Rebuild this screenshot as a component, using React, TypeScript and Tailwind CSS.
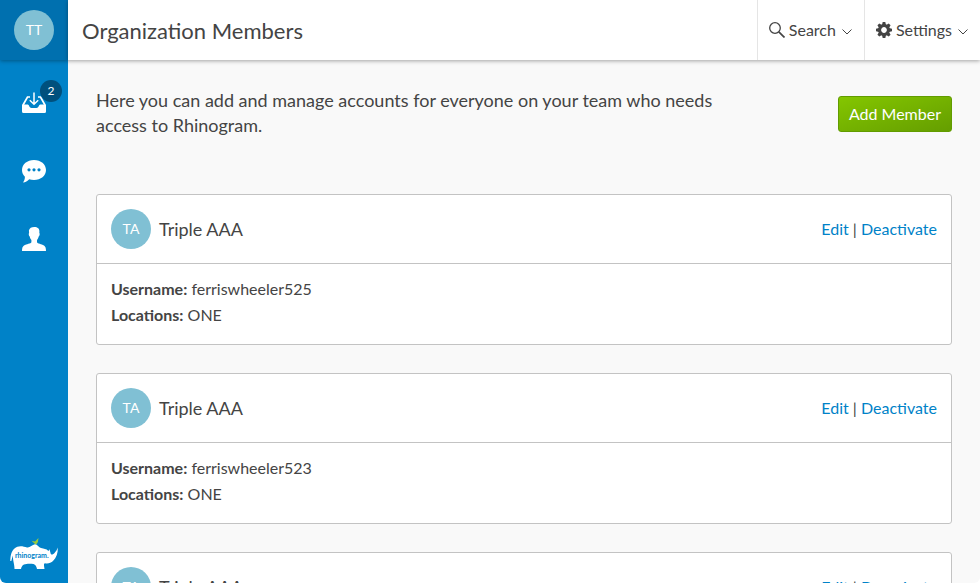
import type { ReactNode } from "react";

type Member = { id: number; initials: string; name: string; username: string; locations: string };

const members: Member[] = [
  { id: 1, initials: "TA", name: "Triple AAA", username: "ferriswheeler525", locations: "ONE" },
  { id: 2, initials: "TA", name: "Triple AAA", username: "ferriswheeler523", locations: "ONE" },
  { id: 3, initials: "TA", name: "Triple AAA", username: "ferriswheeler522", locations: "ONE" },
];

function Avatar({ initials }: { initials: string }) {
  return (
    <span className="flex size-10 shrink-0 items-center justify-center rounded-full bg-[#80c0d4] text-sm text-white">
      {initials}
    </span>
  );
}

function InboxIcon() {
  return (
    <svg viewBox="0 0 24 22" className="h-[22px] w-6" fill="none" aria-hidden="true">
      <path
        d="M0 12.500V19.500Q0 21 1.500 21H22.500Q24 21 24 19.500V12.500H18.200C17 12.500 16.600 16 14.500 16H9.500C7.400 16 7 12.500 5.800 12.500Z"
        fill="#fff"
      />
      <path d="M1 13L5.500 5H8M23 13L18.500 5H16" stroke="#fff" strokeWidth="1.700" />
      <path d="M12 .5V12M7.800 8.300L12 12.300L16.200 8.300" stroke="#fff" strokeWidth="1.500" />
    </svg>
  );
}

function ChatIcon() {
  return (
    <svg viewBox="0 0 24 23" className="h-[23px] w-6" aria-hidden="true">
      <path
        d="M12 0C18.800 0 24 4.200 24 10S18.800 20 12 20C10.200 20 8.600 19.800 7.200 19.300C5.500 21.200 3.500 22.300 1 22.500C2.200 21 2.900 19.200 2.900 16.800C1.100 15 0 12.800 0 10C0 4.200 5.200 0 12 0Z"
        fill="#fff"
      />
      <g fill="#0082c8">
        <circle cx="7" cy="9.800" r="1.600" />
        <circle cx="12" cy="9.800" r="1.600" />
        <circle cx="17" cy="9.800" r="1.600" />
      </g>
    </svg>
  );
}

function PersonIcon() {
  return (
    <svg viewBox="0 0 24 24" className="size-6" fill="#fff" aria-hidden="true">
      <path d="M12.300 0C15.500 0 17.700 1.500 17.400 4.800L17.300 6C18 6.300 17.700 9 16.700 9.600C16.300 11.200 15.800 12 15 12.900V15.200C15.600 16.600 19.500 16.900 22 18.500C23.500 19.500 24 21.300 24 24H0C0 21.300 .5 19.500 2 18.500C4.500 16.900 8.800 16.600 9.400 15.200V12.900C8.600 12 8 11.200 7.700 9.600C6.700 9 6.500 6.300 7.100 6L6.900 3.500C7.500 1 9.500 .1 12.300 0Z" />
    </svg>
  );
}

function RhinoLogo() {
  return (
    <svg viewBox="0 -2 48 32" className="h-8 w-12" aria-label="rhinogram" role="img">
      <path
        d="M.3 21C.5 15 1.500 11 4.500 8.500C8 5 13 6 17 7.500C20 8 22 5 25 4.300C27.500 4.300 28 7 31 8C34 9 36 8.500 38.500 11L39.500 9.300L40.800 14C42 15 43 14.500 44.500 13C46 11.500 46.800 10 47.800 7.500C48 13 46.500 17.500 43 21C41 23 38 24 35 23.300C33.500 23.500 34 25 34.500 29H27C26.500 26.500 25.500 24.500 23.500 24C20 23.500 16 23.700 14 24.500C12 25.500 11.500 27 11 29H4.500C4.500 24.500 3 21.500 2.800 15.500C2.300 17.500 1.800 19 1.300 21Z"
        fill="#fff"
      />
      <path
        d="M21.500 .8L25 1.500L28.500 -2L27.900 2C27 3.600 26.500 4 25.500 4.600L24 3Z"
        fill="#9bcb3c"
      />
      <text x="5" y="17.500" fontSize="7" fontWeight="700" fontFamily="Lato, sans-serif" fill="#0082c8">
        rhinogram.
      </text>
    </svg>
  );
}

function SearchIcon() {
  return (
    <svg viewBox="0 0 16 16" className="size-4" fill="none" stroke="#444" aria-hidden="true">
      <circle cx="6" cy="6" r="5.300" strokeWidth="1.300" />
      <path d="M9.800 9.800L15.500 15.500" strokeWidth="1.700" />
    </svg>
  );
}

function GearIcon() {
  return (
    <svg viewBox="-8 -8 16 16" className="size-4" fill="#444" aria-hidden="true">
      <path d="M-1.300 -8H1.300L2 -5H-2Z" />
      <path d="M-1.300 -8H1.300L2 -5H-2Z" transform="rotate(45)" />
      <path d="M-1.300 -8H1.300L2 -5H-2Z" transform="rotate(90)" />
      <path d="M-1.300 -8H1.300L2 -5H-2Z" transform="rotate(135)" />
      <path d="M-1.300 -8H1.300L2 -5H-2Z" transform="rotate(180)" />
      <path d="M-1.300 -8H1.300L2 -5H-2Z" transform="rotate(225)" />
      <path d="M-1.300 -8H1.300L2 -5H-2Z" transform="rotate(270)" />
      <path d="M-1.300 -8H1.300L2 -5H-2Z" transform="rotate(315)" />
      <circle r="4.400" fill="none" stroke="#444" strokeWidth="3" />
    </svg>
  );
}

function ChevronIcon() {
  return (
    <svg viewBox="0 0 10 6" className="mt-1 ml-0.5 h-1.5 w-2.5" fill="none" stroke="#444" aria-hidden="true">
      <path d="M.5 .5L5 5L9.500 .5" />
    </svg>
  );
}

function HeaderButton({ icon, label }: { icon: ReactNode; label: string }) {
  return (
    <button type="button" className="flex items-center gap-1 border-l border-[#e5e5e5] pr-3 pl-[11px]">
      {icon}
      <span>{label}</span>
      <ChevronIcon />
    </button>
  );
}

function MemberCard({ member }: { member: Member }) {
  return (
    <li className="rounded-[3px] border border-[#c3c3c3] bg-white">
      <div className="flex items-center gap-2 border-b border-[#c3c3c3] p-3.5">
        <Avatar initials={member.initials} />
        <h2 className="flex-1 text-lg">{member.name}</h2>
        <p>
          <a href="#edit" className="text-[#0082c8]">Edit</a>
          {" | "}
          <a href="#deactivate" className="text-[#0082c8]">Deactivate</a>
        </p>
      </div>
      <div className="px-3.5 pt-3 pb-4 leading-[26px]">
        <p><strong>Username:</strong> {member.username}</p>
        <p><strong>Locations:</strong> {member.locations}</p>
      </div>
    </li>
  );
}

export default function App() {
  return (
    <div className="h-screen bg-white font-[Lato,sans-serif] text-base text-[#444]">
      <div className="flex h-full overflow-hidden rounded-b-md bg-[#f9f9f9]">
        <nav className="flex w-[68px] shrink-0 flex-col items-center bg-[#0082c8]" aria-label="Main">
          <button
            type="button"
            aria-label="Account"
            className="flex h-[60px] w-full shrink-0 items-center justify-center bg-[#0070af] shadow-[0_1px_4px_rgba(0,0,0,0.35)]"
          >
            <Avatar initials="TT" />
          </button>
          <div className="flex flex-1 flex-col pt-[9px]">
            <a href="#inbox" aria-label="Inbox" className="relative flex size-[68px] items-center justify-center">
              <InboxIcon />
              <span className="absolute top-[11px] right-1.5 flex size-[22px] items-center justify-center rounded-full bg-[#00507d] text-xs text-white">
                2
              </span>
            </a>
            <a href="#messages" aria-label="Messages" className="flex size-[68px] items-center justify-center">
              <ChatIcon />
            </a>
            <a href="#contacts" aria-label="Contacts" className="flex size-[68px] items-center justify-center">
              <PersonIcon />
            </a>
          </div>
          <div className="pb-[13px]">
            <RhinoLogo />
          </div>
        </nav>
        <div className="flex min-w-0 flex-1 flex-col">
          <header className="z-10 flex h-[60px] shrink-0 bg-white shadow-[0_1px_4px_rgba(0,0,0,0.35)]">
            <h1 className="flex flex-1 items-center pl-3.5 text-[22px]">Organization Members</h1>
            <HeaderButton icon={<SearchIcon />} label="Search" />
            <HeaderButton icon={<GearIcon />} label="Settings" />
          </header>
          <main className="flex-1 overflow-y-auto p-7 [scrollbar-width:none]">
            <div className="flex items-start justify-between pb-14">
              <p className="max-w-[620px] text-lg leading-[25px]">
                Here you can add and manage accounts for everyone on your team who needs access to Rhinogram.
              </p>
              <button
                type="button"
                className="mt-2 h-9 shrink-0 rounded-[3px] border border-[#629c00] bg-linear-to-br from-[#84c600] to-[#659e00] px-2.5 text-white"
              >
                Add Member
              </button>
            </div>
            <ul className="flex flex-col gap-7">
              {members.map((m) => (
                <MemberCard key={m.id} member={m} />
              ))}
            </ul>
          </main>
        </div>
      </div>
    </div>
  );
}
